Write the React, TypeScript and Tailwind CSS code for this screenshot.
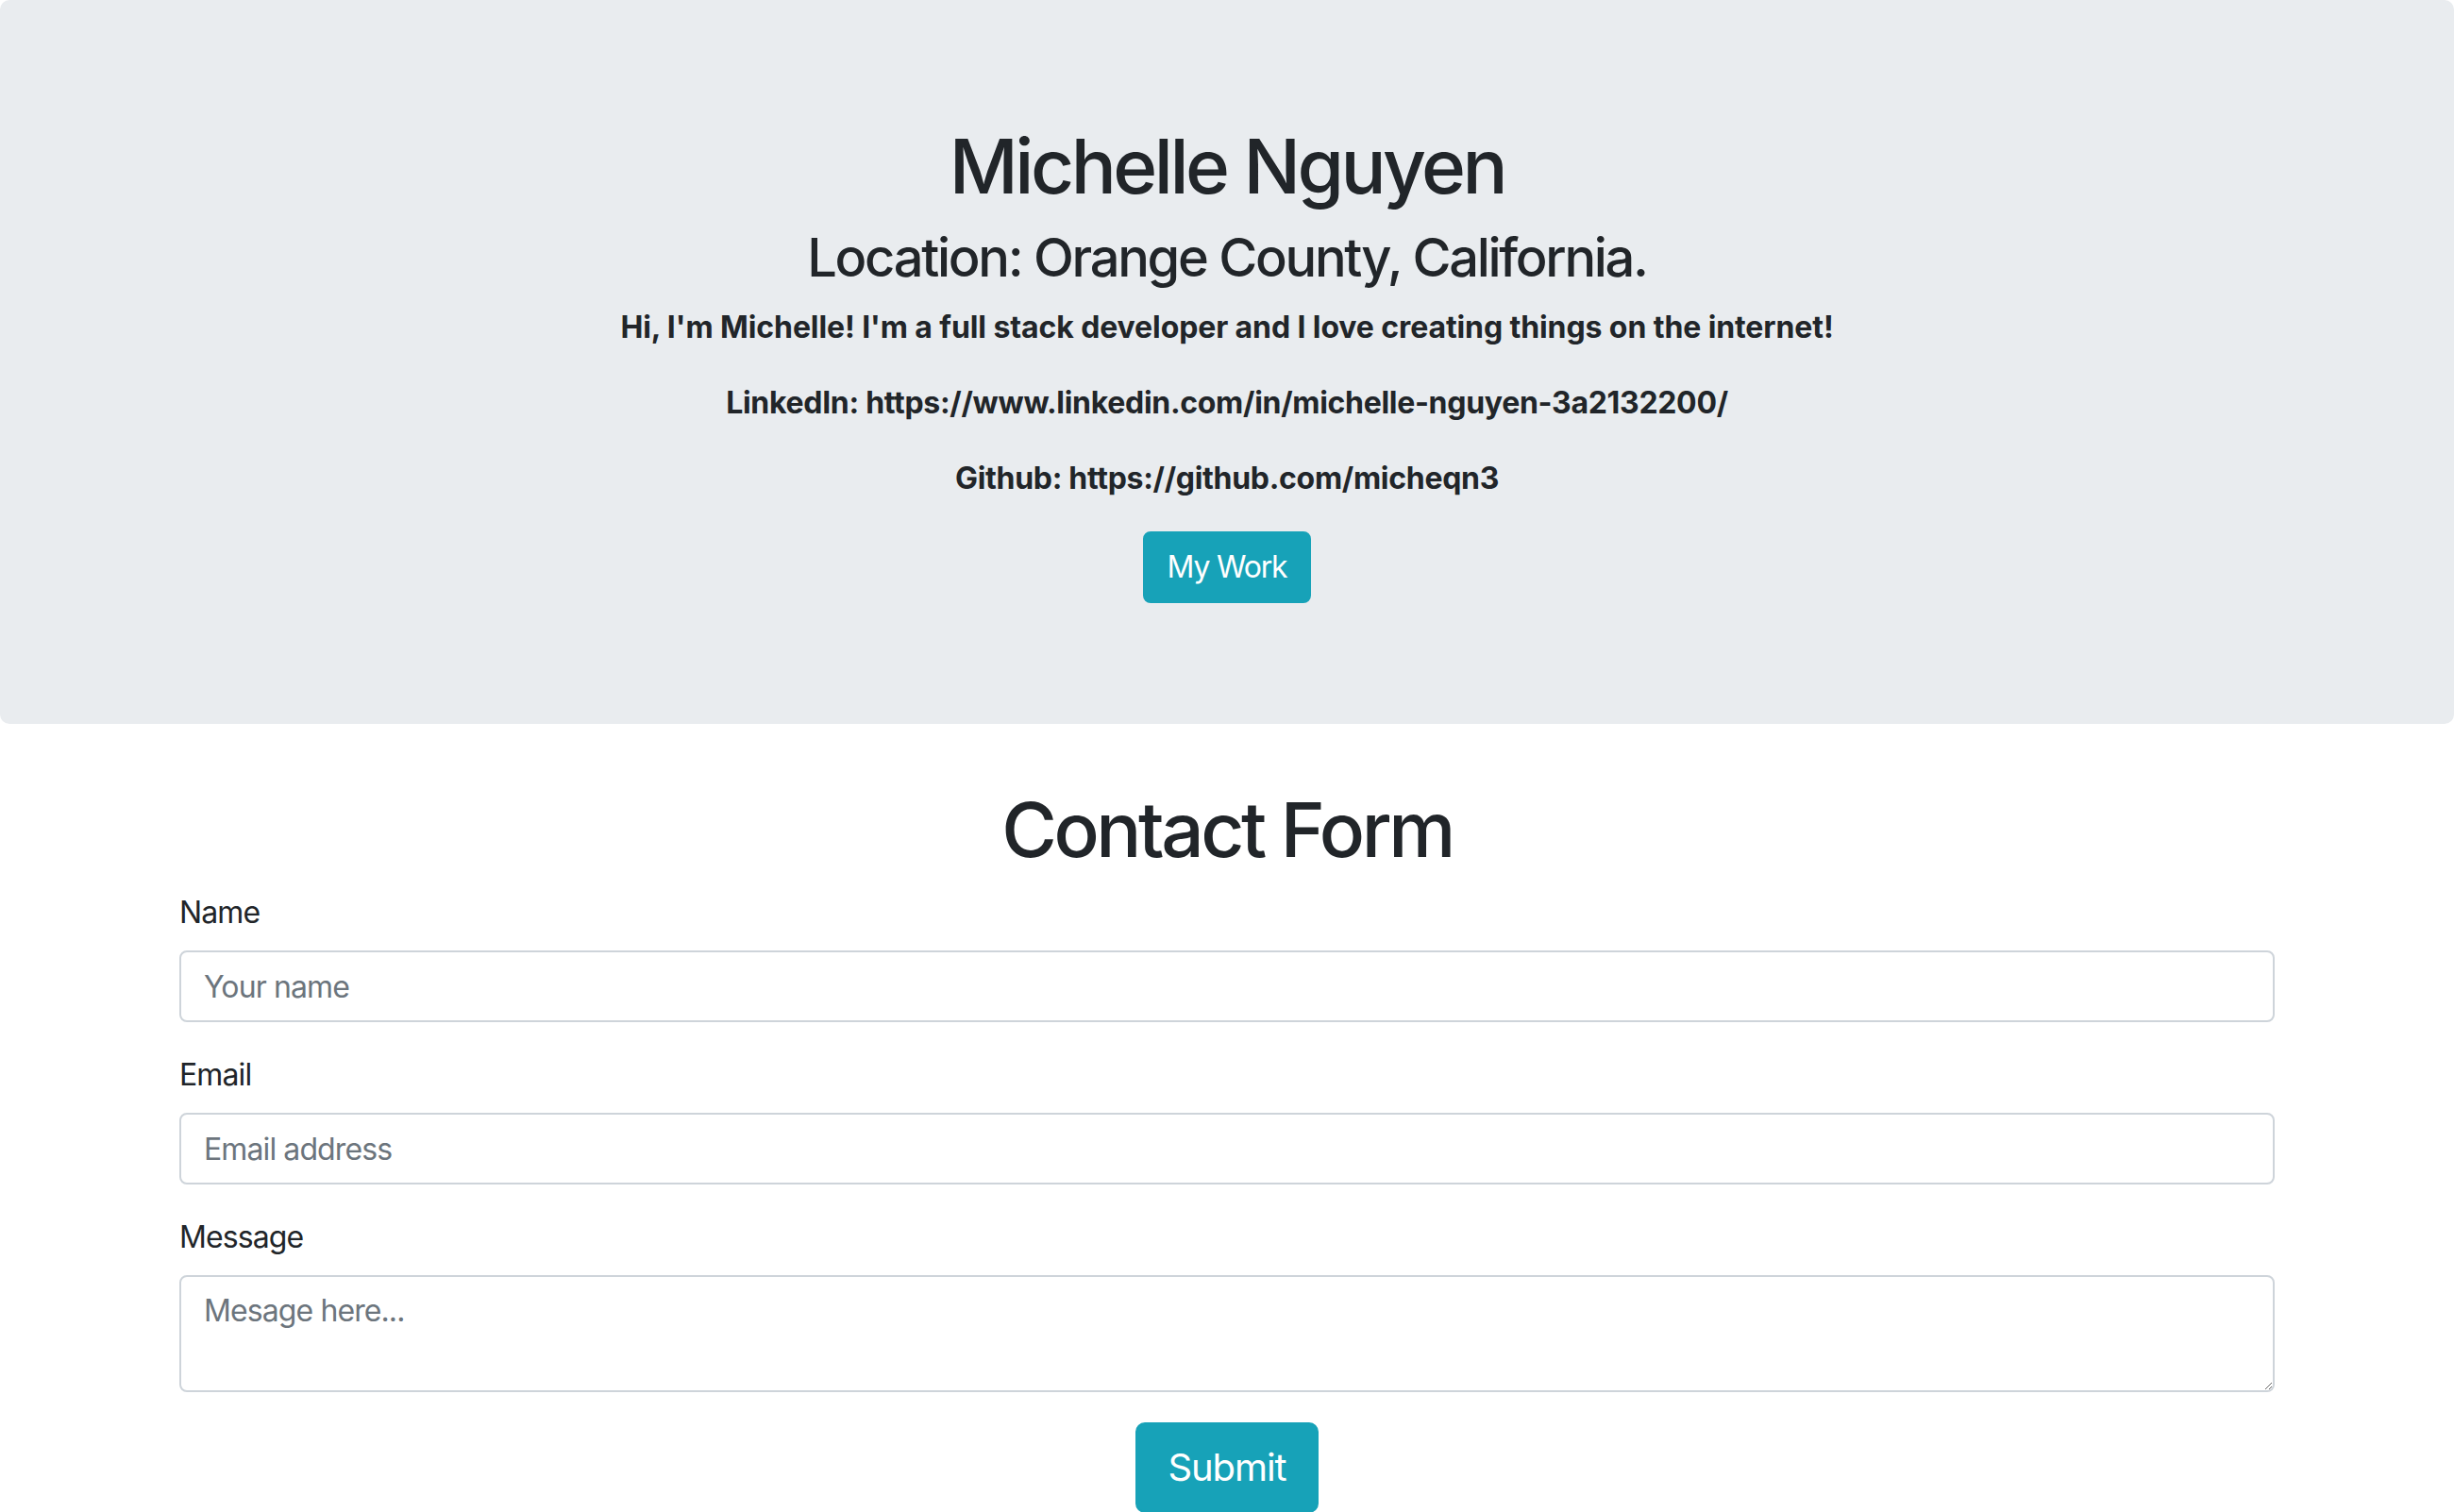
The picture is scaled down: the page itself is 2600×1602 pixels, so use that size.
import React from "react";

const inputCls =
  "block w-full h-[76px] px-[24px] py-[12px] border-2 border-[#ced4da] rounded-[8px] text-[32px] leading-[48px] tracking-[-0.9px] text-[#495057] placeholder:text-[#6c757d] outline-none";

export default function App() {
  return (
    <div
      className="min-h-screen bg-white text-[#212529] text-[32px] leading-[1.5]"
      style={{ fontFamily: 'Inter, "Noto Sans", "Liberation Sans", sans-serif' }}
    >
      <div className="bg-[#e9ecef] rounded-[10px] px-[64px] pt-[128px] pb-[128px] mb-[64px] text-center">
        <h1 className="text-[80px] leading-[1.2] font-medium mb-[16px] tracking-[-3.5px]">Michelle Nguyen</h1>
        <h3 className="text-[56px] leading-[1.2] font-medium mb-[16px] tracking-[-2.3px]">
          Location: Orange County, California.
        </h3>
        <p className="font-bold mb-[32px] tracking-[-0.1px]">
          Hi, I'm Michelle! I'm a full stack developer and I love creating things on the internet!
        </p>
        <p className="font-bold mb-[32px] tracking-[-0.3px]">
          LinkedIn: https://www.linkedin.com/in/michelle-nguyen-3a2132200/
        </p>
        <p className="font-bold mb-[32px] tracking-[-0.3px]">Github: https://github.com/micheqn3</p>
        <button className="bg-[#17a2b8] text-white border-2 border-[#17a2b8] rounded-[8px] px-[24px] py-[12px] text-[32px] leading-[48px] tracking-[-1.2px]">
          My Work
        </button>
      </div>

      <div className="mx-auto w-[2280px] px-[30px]">
        <h1 className="text-[80px] leading-[1.2] font-medium mb-[16px] text-center tracking-[-3.4px]">Contact Form</h1>
        <form onSubmit={(e) => e.preventDefault()}>
          <div className="mb-[32px]">
            <label className="block mb-[16px] tracking-[-0.9px]">Name</label>
            <input type="text" placeholder="Your name" className={inputCls} />
          </div>
          <div className="mb-[32px]">
            <label className="block mb-[16px] tracking-[-0.9px]">Email</label>
            <input type="email" placeholder="Email address" className={inputCls} />
          </div>
          <div className="mb-[32px]">
            <label className="block mb-[16px] tracking-[-0.9px]">Message</label>
            <textarea
              rows={2}
              placeholder="Mesage here..."
              className="block w-full h-[124px] px-[24px] py-[12px] border-2 border-[#ced4da] rounded-[8px] text-[32px] leading-[48px] tracking-[-0.9px] text-[#495057] placeholder:text-[#6c757d] outline-none"
            />
          </div>
          <div className="text-center">
            <button
              type="submit"
              className="bg-[#17a2b8] text-white border-2 border-[#17a2b8] rounded-[10px] px-[32px] py-[16px] text-[40px] leading-[60px] tracking-[-1.1px]"
            >
              Submit
            </button>
          </div>
        </form>
      </div>
    </div>
  );
}
